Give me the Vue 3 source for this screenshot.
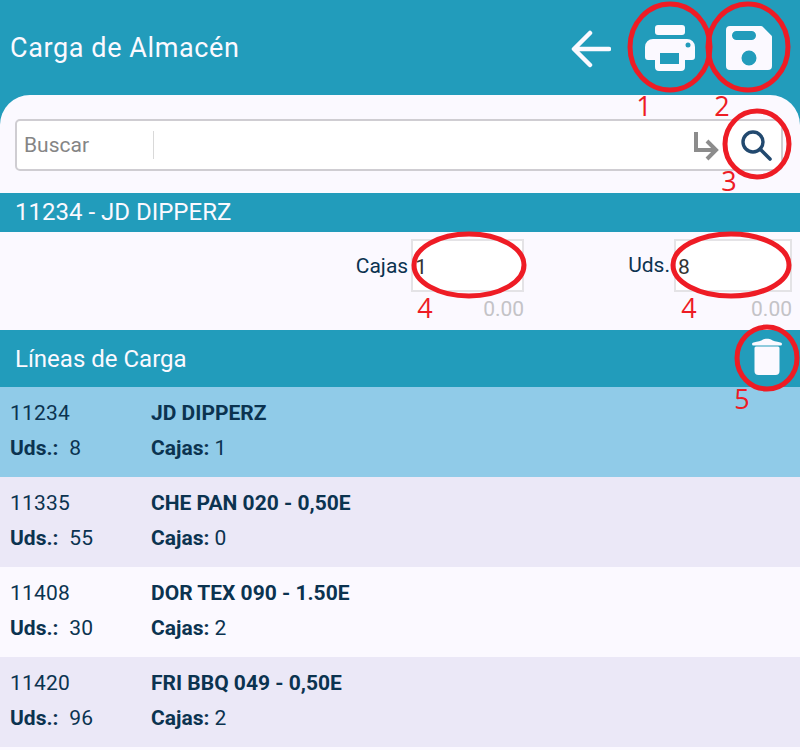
<script setup>
const lines = [
  { code: '11234', name: 'JD DIPPERZ', uds: 8, cajas: 1, selected: true },
  { code: '11335', name: 'CHE PAN 020 - 0,50E', uds: 55, cajas: 0 },
  { code: '11408', name: 'DOR TEX 090 - 1.50E', uds: 30, cajas: 2 },
  { code: '11420', name: 'FRI BBQ 049 - 0,50E', uds: 96, cajas: 2 }
]

// red marks drawn over the screenshot
const rings = [
  { cx: 670, cy: 47, rx: 40, ry: 43 },
  { cx: 748, cy: 47, rx: 40, ry: 43 },
  { cx: 757, cy: 144, rx: 32, ry: 33 },
  { cx: 469, cy: 265, rx: 55, ry: 31 },
  { cx: 731, cy: 265, rx: 58, ry: 31 },
  { cx: 767, cy: 358, rx: 30, ry: 31 }
]
const marks = [
  { n: 1, x: 644, y: 116 },
  { n: 2, x: 722, y: 116 },
  { n: 3, x: 729, y: 191 },
  { n: 4, x: 425, y: 318 },
  { n: 4, x: 689, y: 318 },
  { n: 5, x: 742, y: 409 }
]
</script>

<template>
  <div class="page">
    <header class="topbar">
      <h1>Carga de Almacén</h1>
      <div class="actions">
        <svg class="icon-back" viewBox="0 0 42 40" width="42" height="40">
          <path d="M40 20H6M21 4L5 20l16 16" fill="none" stroke="#fbf9ff" stroke-width="4.500" stroke-linecap="round" stroke-linejoin="round" />
        </svg>
        <svg class="icon-print" viewBox="0 0 50 46" width="50" height="46">
          <rect x="10" y="0" width="30" height="10" rx="3" fill="#fbf9ff" />
          <path fill="#fbf9ff" fill-rule="evenodd" d="M8 14h34a8 8 0 0 1 8 8v10a3 3 0 0 1-3 3h-7v7a4 4 0 0 1-4 4H14a4 4 0 0 1-4-4v-7H3a3 3 0 0 1-3-3V22a8 8 0 0 1 8-8zM15 28v11h19V28z" />
          <circle cx="43" cy="20" r="2.500" fill="#229cbb" />
        </svg>
        <svg class="icon-save" viewBox="0 0 46 44" width="46" height="44">
          <path fill="#fbf9ff" fill-rule="evenodd" d="M4 0h31a2 2 0 0 1 1.500.6L45.400 9.500a2 2 0 0 1 .6 1.500V40a4 4 0 0 1-4 4H4a4 4 0 0 1-4-4V4a4 4 0 0 1 4-4zM10.500 5a4.500 4.500 0 0 0 0 9h15a4.500 4.500 0 0 0 0-9zM23 24.500a7.500 7.500 0 1 0 0 15 7.500 7.500 0 0 0 0-15z" />
        </svg>
      </div>
    </header>

    <main class="sheet">
      <div class="search-wrap">
        <div class="search">
          <span class="search-label">Buscar</span>
          <span class="search-sep"></span>
          <svg class="icon-enter" viewBox="0 0 26 30" width="26" height="30">
            <path d="M3 1v18h20M14 10l9 9-9 9" fill="none" stroke="#8c8c8c" stroke-width="4" />
          </svg>
          <svg class="icon-search" viewBox="0 0 32 32" width="32" height="32">
            <circle cx="13" cy="13" r="10" fill="none" stroke="#22496f" stroke-width="3.400" />
            <path d="M20 20l10 10" stroke="#22496f" stroke-width="3.600" stroke-linecap="round" />
          </svg>
        </div>
      </div>

      <div class="band product">11234 - JD DIPPERZ</div>

      <div class="qty-row">
        <div class="qty qty-cajas">
          <label>Cajas</label>
          <div class="qty-field">
            <div class="qty-input">1</div>
            <div class="qty-hint">0.00</div>
          </div>
        </div>
        <div class="qty qty-uds">
          <label>Uds.</label>
          <div class="qty-field">
            <div class="qty-input">8</div>
            <div class="qty-hint">0.00</div>
          </div>
        </div>
      </div>

      <div class="band lines-head">
        <span>Líneas de Carga</span>
        <svg class="icon-trash" viewBox="0 0 30 38" width="30" height="38">
          <path fill="#fbf9ff" d="M1.500 4.500C6 3.500 9 3 11 1.500 12 .5 18 .5 19 1.500 21 3 24 3.500 28.500 4.500a1.300 1.300 0 0 1 0 3H1.500a1.300 1.300 0 0 1 0-3z" />
          <path fill="#fbf9ff" d="M4 8.500h22a1.500 1.500 0 0 1 1.500 1.500v23a4 4 0 0 1-4 4h-17a4 4 0 0 1-4-4V10A1.500 1.500 0 0 1 4 8.500z" />
        </svg>
      </div>

      <ul class="lines">
        <li v-for="line in lines" :key="line.code" class="line" :class="{ selected: line.selected }">
          <div class="col-left">
            <div>{{ line.code }}</div>
            <div><b>Uds.:</b>&nbsp; {{ line.uds }}</div>
          </div>
          <div class="col-right">
            <div><b>{{ line.name }}</b></div>
            <div><b>Cajas:</b> {{ line.cajas }}</div>
          </div>
        </li>
      </ul>
    </main>

    <svg class="marks" viewBox="0 0 800 750" width="800" height="750">
      <ellipse v-for="(r, i) in rings" :key="i" :cx="r.cx" :cy="r.cy" :rx="r.rx" :ry="r.ry" fill="none" stroke="#ee1c25" stroke-width="5" />
      <text v-for="(m, i) in marks" :key="'m' + i" :x="m.x" :y="m.y" text-anchor="middle" class="mark-num">{{ m.n }}</text>
    </svg>
  </div>
</template>

<style scoped>
.page {
  position: relative;
  width: 800px;
  height: 750px;
  overflow: hidden;
  background: #fbf9ff;
  font-family: Roboto, "Liberation Sans", sans-serif;
  color: #0b3350;
}

.topbar {
  height: 125px;
  margin-bottom: -30px;
  padding: 0 28px 30px 10px;
  box-sizing: border-box;
  display: flex;
  align-items: center;
  justify-content: space-between;
  background: #229cbb;
  color: #fbf9ff;
}

.topbar h1 {
  margin: 0;
  font-size: 27px;
  font-weight: 400;
  letter-spacing: 0.6px;
}

.actions {
  display: flex;
  align-items: center;
}

.icon-back {
  margin-top: 3px;
  margin-right: 34px;
}

.icon-print { margin-right: 31px; }

.sheet {
  position: relative;
  border-radius: 30px 30px 0 0;
  background: #fbf9ff;
}

.search-wrap {
  padding: 24px 17px 22px 15px;
}

.search {
  height: 52px;
  box-sizing: border-box;
  display: flex;
  align-items: center;
  background: #fff;
  border: 2px solid #cfcdd2;
  border-radius: 5px;
  padding-left: 7px;
}

.search-label {
  width: 129px;
  font-size: 21px;
  color: #858585;
}

.search-sep {
  width: 1px;
  height: 28px;
  background: #d9d9d9;
}

.icon-enter {
  margin-left: auto;
  margin-right: 21px;
  margin-top: 2px;
}

.icon-search {
  margin-right: 9px;
}

.band {
  background: #229cbb;
  color: #fbf9ff;
  padding-left: 15px;
}

.product {
  height: 39px;
  line-height: 38px;
  font-size: 24px;
}

.qty-row {
  height: 98px;
  position: relative;
  display: flex;
  justify-content: flex-end;
  padding-right: 8px;
  gap: 104px;
}

.qty {
  display: flex;
  padding-top: 7px;
}

.qty label {
  font-size: 21px;
  line-height: 24px;
  padding-top: 15px;
  margin-right: 3px;
}

.qty-uds label {
  padding-top: 14px;
  margin-right: 4px;
}

.qty-field {
  width: 113px;
}

.qty-uds .qty-field {
  width: 118px;
}

.qty-input {
  height: 53px;
  box-sizing: border-box;
  background: #fff;
  border: 2px solid #e4e3e6;
  padding: 14px 0 0 2px;
  font-size: 21px;
  line-height: 24px;
  color: #333;
}

.qty-hint {
  margin-top: 4px;
  text-align: right;
  font-size: 21px;
  line-height: 26px;
  color: #c4c3c7;
}

.lines-head {
  height: 57px;
  display: flex;
  align-items: center;
  justify-content: space-between;
  font-size: 24px;
  padding-right: 18px;
}

.icon-trash {
  margin-top: -3px;
}

.lines {
  margin: 0;
  padding: 0;
  list-style: none;
}

.line {
  height: 90px;
  box-sizing: border-box;
  padding: 9px 0 0 10px;
  display: flex;
  font-size: 21px;
  line-height: 35px;
  background: #fbf9ff;
}

.line:nth-child(even) {
  background: #ebe8f7;
}

.line.selected {
  background: #90cbe8;
}

.col-left {
  width: 141px;
  letter-spacing: 0.2px;
}

.col-left b {
  letter-spacing: 0;
}

.marks {
  position: absolute;
  left: 0;
  top: 0;
  pointer-events: none;
}

.mark-num {
  font-family: "Open Sans", "Liberation Sans", sans-serif;
  font-size: 27px;
  fill: #ee1c25;
}
</style>
